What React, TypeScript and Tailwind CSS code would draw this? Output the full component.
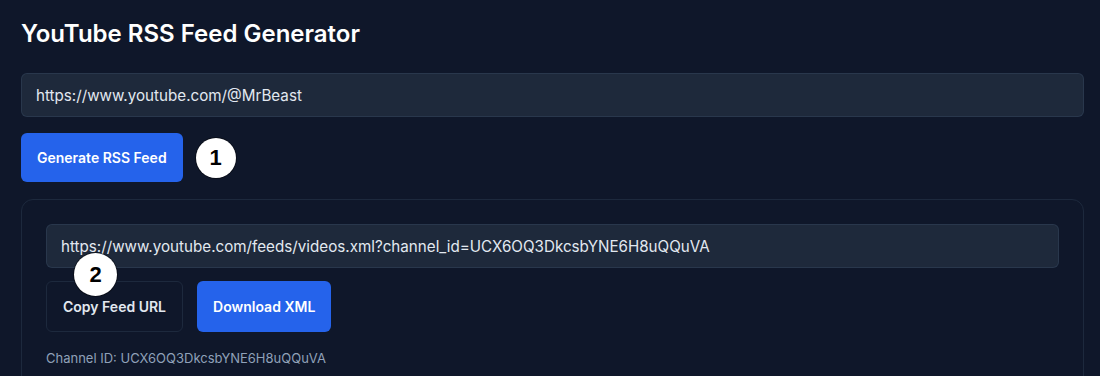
const feedUrl =
  'https://www.youtube.com/feeds/videos.xml?channel_id=UCX6OQ3DkcsbYNE6H8uQQuVA';
const channelId = 'UCX6OQ3DkcsbYNE6H8uQQuVA';

function StepBadge({ n, className }: { n: number; className?: string }) {
  return (
    <span
      className={
        'flex items-center justify-center rounded-full bg-white text-black font-["Liberation_Sans",sans-serif] font-bold text-[22px] leading-none ring-1 ring-black/40 ' +
        (className ?? '')
      }
    >
      {n}
    </span>
  );
}

export default function App() {
  return (
    <div className="min-h-screen bg-[#0f172a] pl-[21px] pr-[16px] pt-[18px] font-['Inter',sans-serif] text-slate-100">
      <h1 className="text-2xl font-semibold leading-8 text-white">
        YouTube RSS Feed Generator
      </h1>

      <input
        readOnly
        value="https://www.youtube.com/@MrBeast"
        className="mt-[23px] block h-[44px] w-full rounded-md border border-slate-700/60 bg-[#1e293b] px-[14px] text-[15.2px] text-slate-200 outline-none"
      />

      <div className="mt-4 flex items-center gap-[13px]">
        <button className="h-[49px] rounded-md bg-[#2563eb] px-4 text-sm font-semibold text-white">
          Generate RSS Feed
        </button>
        <StepBadge n={1} className="h-10 w-10" />
      </div>

      <div className="mt-[17px] rounded-xl border border-slate-800 p-6">
        <input
          readOnly
          value={feedUrl}
          className="block h-[44px] w-full rounded-md border border-slate-700/60 bg-[#1e293b] px-[14px] text-[15.2px] text-slate-200 outline-none"
        />

        <div className="relative mt-[13px] flex gap-3.5">
          <button className="h-[51px] rounded-md border border-slate-800 px-4 text-sm font-semibold text-slate-200">
            Copy Feed URL
          </button>
          <button className="h-[51px] rounded-md bg-[#2563eb] px-4 text-sm font-semibold text-white">
            Download XML
          </button>
          <StepBadge n={2} className="absolute left-[28px] top-[-28px] h-[43px] w-[43px]" />
        </div>

        <p className="mt-4 text-[13px] leading-5 text-slate-400">
          Channel ID: {channelId}
        </p>
      </div>
    </div>
  );
}
